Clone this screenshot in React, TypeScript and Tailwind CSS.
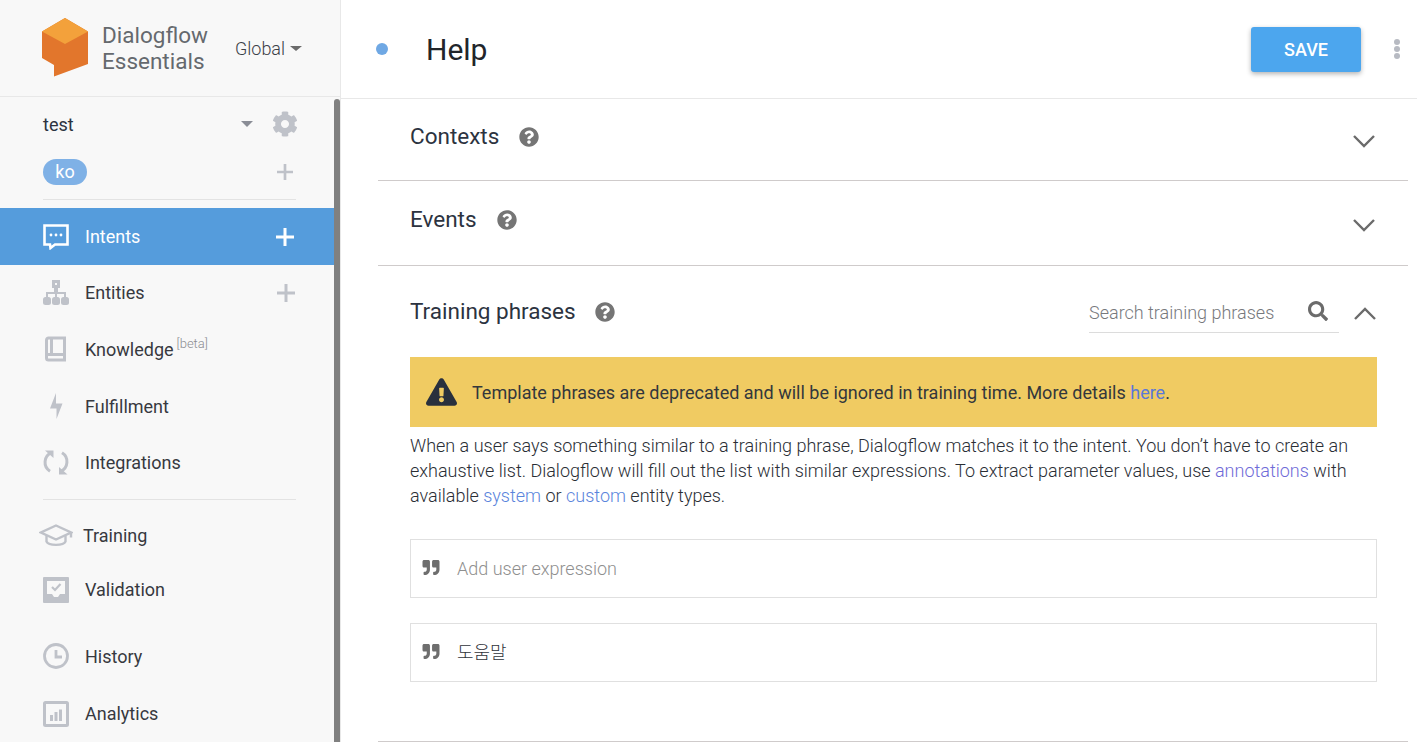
import React from "react"
import { FaCog, FaQuestionCircle, FaSearch, FaQuoteRight, FaExclamationTriangle } from "react-icons/fa"

const Plus = ({ className }: { className: string }) => (
  <svg viewBox="0 0 18 18" className={className} fill="currentColor">
    <path d="M7.5 0h3v7.5H18v3h-7.5V18h-3v-7.5H0v-3h7.5z" />
  </svg>
)

const Chevron = ({ up }: { up?: boolean }) => (
  <svg viewBox="0 0 22 13" className="h-[13px] w-[22px] text-[#6b6b6b]" fill="none" stroke="currentColor" strokeWidth="2.4">
    <path d={up ? "M1 12 11 2l10 10" : "M1 1l10 10L21 1"} />
  </svg>
)

const Logo = () => (
  <svg viewBox="0 0 48 60" className="h-[60px] w-[48px]">
    <path d="M24 0 47 13.500V46L13 58.500V47L1 40V13.500z" fill="#e2762c" />
    <path d="M24 0 47 13.500 24 26 1 13.500z" fill="#f3a13b" />
  </svg>
)

const IntentsIcon = () => (
  <svg viewBox="0 0 26 26" className="h-[26px] w-[26px]" fill="none">
    <path d="M1.500 1.500h23v19H12l-4.500 3.500-.5-3.500H1.500z" stroke="#fff" strokeWidth="2.600" />
    <circle cx="8" cy="11" r="1.400" fill="#fff" />
    <circle cx="13" cy="11" r="1.400" fill="#fff" />
    <circle cx="18" cy="11" r="1.400" fill="#fff" />
  </svg>
)

const EntitiesIcon = () => (
  <svg viewBox="0 0 26 26" className="h-[26px] w-[26px]" fill="#bfc2c9">
    <path d="M9 0h8v8h-2v4h8v5h-2v-3h-7v3h-2v-3H5v3H3v-5h8V8H9zm3 3v2h2V3z" fillRule="evenodd" />
    <rect x="0" y="17" width="8" height="8" rx="2.500" />
    <rect x="9" y="17" width="8" height="8" rx="2.500" />
    <rect x="18" y="17" width="8" height="8" rx="2.500" />
  </svg>
)

const BookIcon = () => (
  <svg viewBox="0 0 26 26" className="h-[26px] w-[26px]" fill="none" stroke="#bfc2c9" strokeWidth="3">
    <path d="M3.500 20V4a2 2 0 0 1 2-2h16v22h-16a2 2 0 0 1-2-2zM4 18.500h17M8.500 3v14" />
  </svg>
)

const BoltIcon = () => (
  <svg viewBox="0 0 14 26" className="h-[26px] w-[14px]" fill="#bfc2c9">
    <path d="M7 0v10.500h6.500L7.500 26V15.500H1z" />
  </svg>
)

const SyncIcon = () => (
  <svg viewBox="0 0 26 26" className="h-[26px] w-[26px]" fill="none" stroke="#bfc2c9" strokeWidth="3">
    <path d="M8.500 3.600A10.500 10.500 0 0 0 7 22.200M17.500 22.400A10.500 10.500 0 0 0 19 3.800" />
    <path d="M2 1.500h8.500V9z" fill="#bfc2c9" stroke="none" />
    <path d="M24.500 25.500H16V18z" fill="#bfc2c9" stroke="none" />
  </svg>
)

const CapIcon = () => (
  <svg viewBox="0 0 34 24" className="h-[24px] w-[34px]" fill="none" stroke="#bfc2c9" strokeWidth="2.400">
    <path d="M17 1.500 32 8.500l-15 7-15-7z" />
    <path d="M7.500 11.500v6c2 4.500 17 4.500 19 0v-6M32 8.500v5" />
  </svg>
)

const ValidationIcon = () => (
  <svg viewBox="0 0 26 26" className="h-[26px] w-[26px]">
    <path d="M0 1a1 1 0 0 1 1-1h24a1 1 0 0 1 1 1v24a1 1 0 0 1-1 1H1a1 1 0 0 1-1-1z" fill="#bfc2c9" />
    <path d="M4 4h18v13h-5l-2 3h-4l-2-3H4z" fill="#f8f8f8" />
    <path d="m9 10 3 3 5.500-6" stroke="#bfc2c9" strokeWidth="2.200" fill="none" />
  </svg>
)

const ClockIcon = () => (
  <svg viewBox="0 0 26 26" className="h-[26px] w-[26px]" fill="none" stroke="#bfc2c9" strokeWidth="2.800">
    <circle cx="13" cy="13" r="11.500" />
    <path d="M13 7v7h6" />
  </svg>
)

const AnalyticsIcon = () => (
  <svg viewBox="0 0 26 26" className="h-[26px] w-[26px]">
    <rect x="1.500" y="1.500" width="23" height="23" rx="1" fill="none" stroke="#bfc2c9" strokeWidth="3" />
    <path d="M7 14h3v6H7zM11.500 11h3v9h-3zM16 8.500h3V20h-3z" fill="#bfc2c9" />
  </svg>
)

const NavRow = ({
  icon,
  label,
  height,
  plus,
  beta,
  shift,
}: {
  icon: React.ReactNode
  label: string
  height: string
  plus?: boolean
  beta?: boolean
  shift?: boolean
}) => (
  <div className={`flex items-center pl-[43px] pr-[45px] ${height}`}>
    <div className={shift ? "-ml-[4px] w-[44px]" : "flex w-[42px] justify-start"}>{icon}</div>
    <span className="text-[18px] text-[#37393f]">{label}</span>
    {beta && <span className="relative -top-[6px] ml-[3px] text-[13px] font-light text-[#8b8d92]">[beta]</span>}
    {plus && <Plus className="ml-auto h-[18px] w-[18px] text-[#bfc2c9]" />}
  </div>
)

const Section = ({ title, gap, height }: { title: string; gap: string; height: string }) => (
  <div className={`flex items-center justify-between border-b border-[#cfcbcb] pl-[32px] pr-[32px] ${height}`}>
    <div className={`flex items-center -mt-[6px] ${gap}`}>
      <span className="text-[22.500px] text-[#2c3340]">{title}</span>
      <FaQuestionCircle className="h-[20px] w-[20px] text-[#757575]" />
    </div>
    <div className="mt-[4px] mr-[1px]">
      <Chevron />
    </div>
  </div>
)

const Expression = ({ text, placeholder }: { text: string; placeholder?: boolean }) => (
  <div className="flex h-[59px] items-center border border-[#e0e0e0] pl-[11px]">
    <FaQuoteRight className="-mt-[2px] h-[17px] w-[18px] text-[#6e6e6e]" />
    <span
      className={`ml-[17px] text-[18px] font-light ${placeholder ? "text-[#8f8f8f]" : "text-[#2f333a]"}`}
      style={{ fontFamily: "Roboto, 'Noto Sans CJK KR', sans-serif" }}
    >
      {text}
    </span>
  </div>
)

export default function App() {
  return (
    <div className="flex h-[742px] w-[1417px] overflow-hidden bg-white font-['Roboto','Noto_Sans_CJK_KR',sans-serif]">
      <aside className="relative flex w-[341px] shrink-0 flex-col border-r border-[#e8e8e8] bg-[#f8f8f8]">
        <div className="flex h-[99px] items-center border-b border-[#e8e8e8] pl-[41px]">
          <Logo />
          <div className="ml-[13px] text-[22.500px] leading-[26px] text-[#65696e]">
            <div>Dialogflow</div>
            <div>Essentials</div>
          </div>
          <div className="ml-[27px] flex items-center text-[18px] font-light text-[#3c4148]">
            Global
            <span className="ml-[5px] h-0 w-0 border-x-[6.500px] border-t-[5px] border-x-transparent border-t-[#6b6b6b]" />
          </div>
        </div>
        <div className="absolute right-0 top-[99px] bottom-0 w-[6px] rounded-t-[3px] bg-[#808080]" />

        <div className="flex h-[56px] items-center pl-[43px] pr-[42px]">
          <span className="text-[18px] text-[#2c3340]">test</span>
          <span className="ml-auto mr-[19px] h-0 w-0 border-x-[6px] border-t-[6px] border-x-transparent border-t-[#8a8d96]" />
          <FaCog className="h-[26px] w-[26px] text-[#bfc2c9]" />
        </div>
        <div className="flex h-[40px] items-center pl-[43px] pr-[47px]">
          <span className="flex h-[26px] w-[44px] items-center justify-center rounded-full bg-[#7fb1e6] text-[18px] text-white">ko</span>
          <Plus className="ml-auto h-[16px] w-[16px] text-[#bfc2c9]" />
        </div>
        <div className="mx-[43px] mr-[44px] mt-[8px] h-px bg-[#e3e3e3]" />

        <div className="mr-[6px] mt-[8px] flex h-[58px] items-center bg-[#559cdc] pl-[43px] pr-[40px]">
          <div className="w-[42px]">
            <IntentsIcon />
          </div>
          <span className="text-[18px] text-white">Intents</span>
          <Plus className="ml-auto h-[18px] w-[18px] text-white" />
        </div>
        <NavRow icon={<EntitiesIcon />} label="Entities" height="h-[57px]" plus />
        <NavRow icon={<BookIcon />} label="Knowledge" height="h-[58px]" beta />
        <NavRow icon={<div className="ml-[6px]"><BoltIcon /></div>} label="Fulfillment" height="h-[58px]" />
        <NavRow icon={<SyncIcon />} label="Integrations" height="h-[57px]" />
        <div className="mx-[43px] mr-[44px] mt-[9px] h-px bg-[#e3e3e3]" />
        <NavRow icon={<CapIcon />} label="Training" height="h-[72px]" shift />
        <NavRow icon={<ValidationIcon />} label="Validation" height="h-[38px]" />
        <div className="mt-[19px]">
          <NavRow icon={<ClockIcon />} label="History" height="h-[58px]" />
        </div>
        <NavRow icon={<AnalyticsIcon />} label="Analytics" height="h-[58px]" />
      </aside>

      <main className="flex min-w-0 flex-1 flex-col">
        <header className="flex h-[99px] shrink-0 items-center border-b border-[#e8e8e8] pl-[35px] pr-[17px]">
          <span className="h-[12px] w-[12px] rounded-full bg-[#6fa8e4]" />
          <h1 className="ml-[38px] text-[30px] text-[#22252a]">Help</h1>
          <button className="ml-auto flex h-[45px] w-[110px] items-center justify-center rounded-[3px] bg-[#4ca6ee] text-[18px] font-medium text-white shadow-[0_2px_5px_rgba(0,0,0,0.3)]">
            SAVE
          </button>
          <div className="ml-[33px] flex flex-col gap-[1px]">
            <span className="h-[6px] w-[6px] rounded-full bg-[#b7bac2]" />
            <span className="h-[6px] w-[6px] rounded-full bg-[#b7bac2]" />
            <span className="h-[6px] w-[6px] rounded-full bg-[#b7bac2]" />
          </div>
        </header>

        <div className="ml-[37px] mr-[9px] flex flex-col">
          <Section title="Contexts" gap="gap-[20px]" height="h-[82px]" />
          <Section title="Events" gap="gap-[20px]" height="h-[85px]" />

          <div className="flex h-[476px] flex-col border-b border-[#cfcbcb] pl-[32px] pr-[31px]">
            <div className="flex h-[91px] items-center justify-between">
              <div className="flex items-center gap-[19px]">
                <span className="text-[22.500px] text-[#2c3340]">Training phrases</span>
                <FaQuestionCircle className="h-[20px] w-[20px] text-[#757575]" />
              </div>
              <div className="flex items-center">
                <div className="flex h-[40px] w-[250px] items-center justify-between border-b border-[#dcdcdc] pr-[11px] mt-[3px]">
                  <span className="text-[18px] font-light text-[#77797d]">Search training phrases</span>
                  <FaSearch className="-mt-[4px] h-[20px] w-[20px] text-[#6b6b6b]" />
                </div>
                <div className="ml-[15px] mr-[1px] mt-[3px]">
                  <Chevron up />
                </div>
              </div>
            </div>

            <div className="flex h-[70px] items-center bg-[#f0cb62] pl-[16px]">
              <FaExclamationTriangle className="h-[28px] w-[31px] text-[#29303d]" />
              <span className="ml-[15px] text-[18px] text-[#33373c]">
                Template phrases are deprecated and will be ignored in training time. More details{" "}
                <span className="text-[#5a78d8]">here</span>.
              </span>
            </div>

            <p className="mt-[6px] text-[18px] font-light leading-[25px] text-[#2a2e35]">
              When a user says something similar to a training phrase, Dialogflow matches it to the intent. You don’t have to create an exhaustive list. Dialogflow will fill out the list with similar expressions. To extract parameter values, use{" "}
              <span className="text-[#6f6bd8]">annotations</span> with available <span className="text-[#5a84dc]">system</span> or{" "}
              <span className="text-[#5a84dc]">custom</span> entity types.
            </p>

            <div className="mt-[31px] flex flex-col gap-[25px]">
              <Expression text="Add user expression" placeholder />
              <Expression text="도움말" />
            </div>
          </div>
        </div>
      </main>
    </div>
  )
}
